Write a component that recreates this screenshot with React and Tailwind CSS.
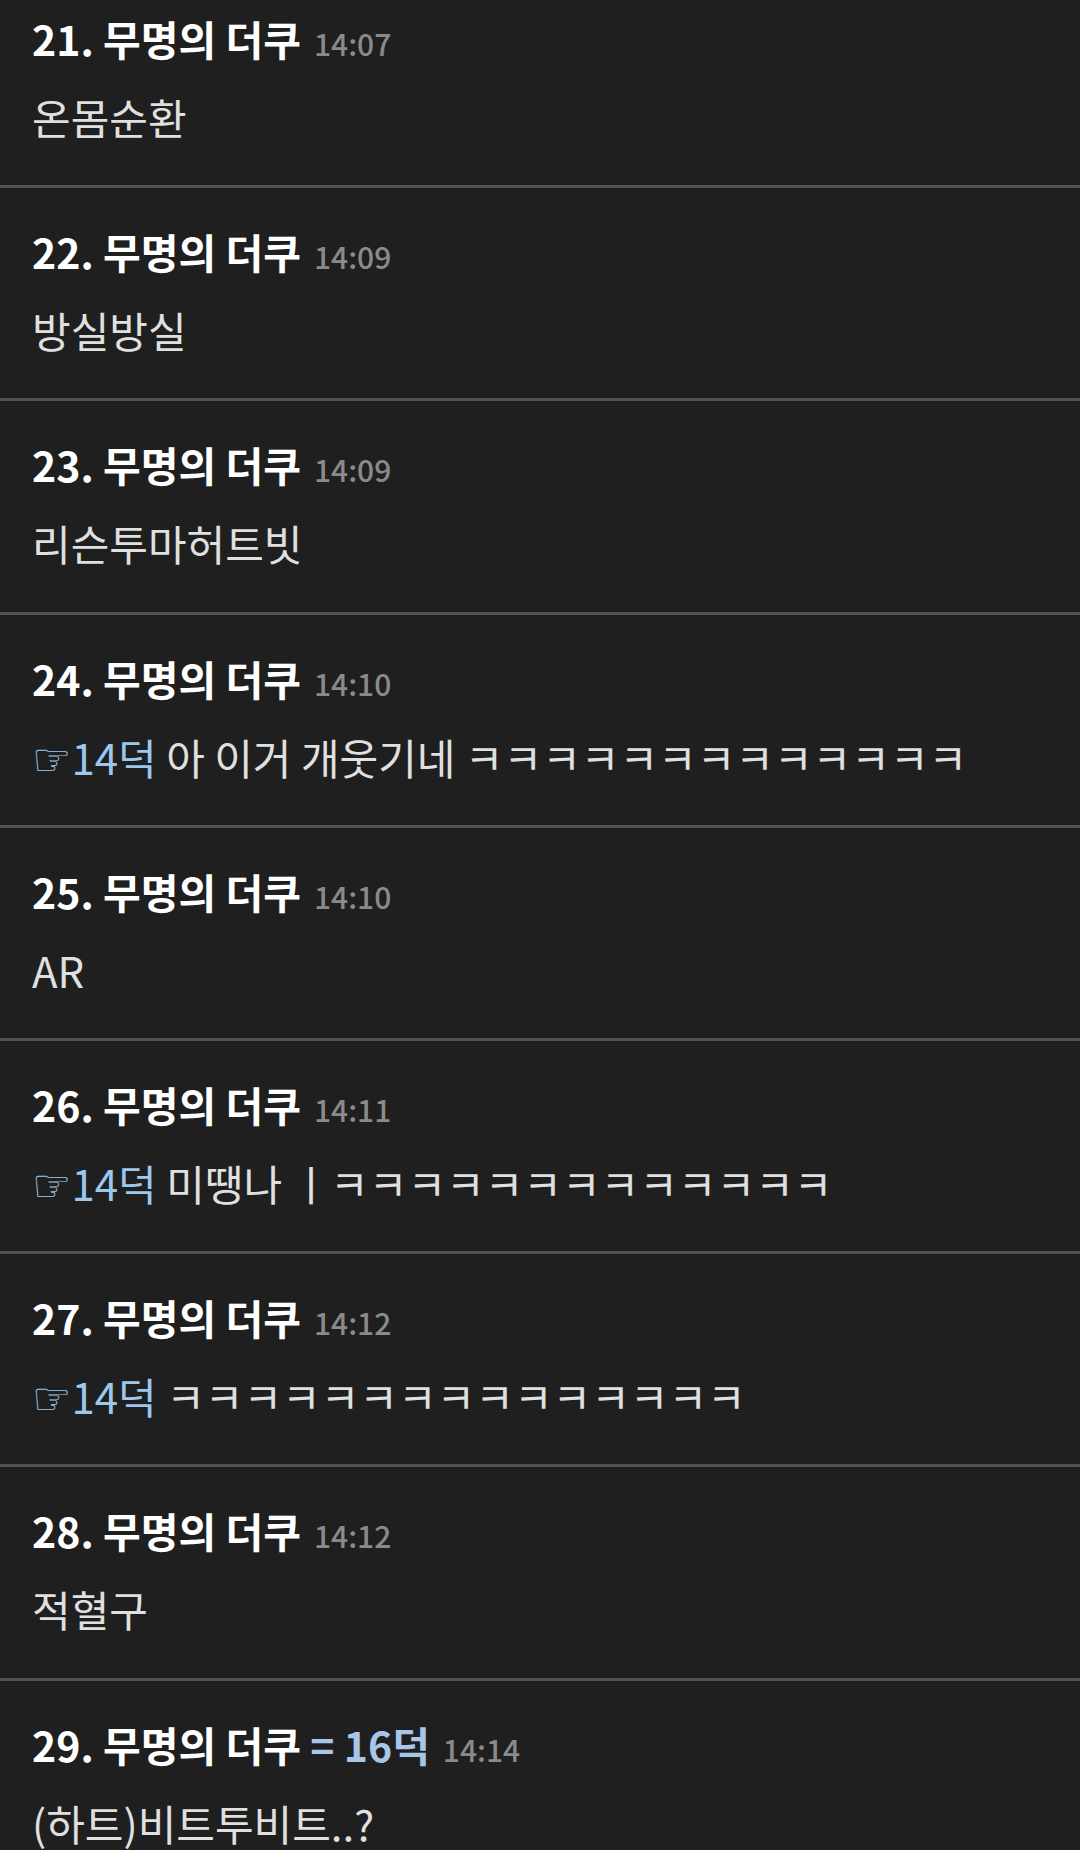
const posts = [
  { no: 21, time: '14:07', body: '온몸순환' },
  { no: 22, time: '14:09', body: '방실방실' },
  { no: 23, time: '14:09', body: '리슨투마허트빗' },
  { no: 24, time: '14:10', anchor: '14덕', body: '아 이거 개웃기네 ㅋㅋㅋㅋㅋㅋㅋㅋㅋㅋㅋㅋㅋ' },
  { no: 25, time: '14:10', body: 'AR' },
  { no: 26, time: '14:11', anchor: '14덕', body: '미땡나 ㅣㅋㅋㅋㅋㅋㅋㅋㅋㅋㅋㅋㅋㅋ' },
  { no: 27, time: '14:12', anchor: '14덕', body: 'ㅋㅋㅋㅋㅋㅋㅋㅋㅋㅋㅋㅋㅋㅋㅋ' },
  { no: 28, time: '14:12', body: '적혈구' },
  { no: 29, time: '14:14', same: '16덕', body: '(하트)비트투비트..?' },
];

const font = { fontFamily: '"Noto Sans CJK KR", "Noto Sans", sans-serif' };

function Post({ post }) {
  return (
    <div className="border-b-[3px] border-[#525252] px-[32px] pt-[38px] pb-[43.2px]">
      <div className="h-[50px] text-[41px] font-bold leading-[50px] text-white whitespace-nowrap">
        {post.no}. 무명의 더쿠
        {post.same && <span className="text-[#a8c7e7]"> = {post.same}</span>}
        <span className="ml-[13px] text-[30px] font-medium leading-none text-[#8a8a8a]">{post.time}</span>
      </div>
      <div className="mt-[29px] h-[50px] text-[42px] leading-[50px] text-[#e0e0e0] whitespace-nowrap">
        {post.anchor && (
          <span className="text-[#9cc8ee]">
            <span style={{ fontFamily: '"DejaVu Sans", sans-serif' }} className="text-[44px] leading-none">☞</span>
            {post.anchor}{' '}
          </span>
        )}
        {post.body}
      </div>
    </div>
  );
}

export default function App() {
  return (
    <div className="h-[1850px] w-[1080px] overflow-hidden bg-[#1f1f1f]" style={font}>
      <div className="-mt-[25px]">
        {posts.map((p) => (
          <Post key={p.no} post={p} />
        ))}
      </div>
    </div>
  );
}
